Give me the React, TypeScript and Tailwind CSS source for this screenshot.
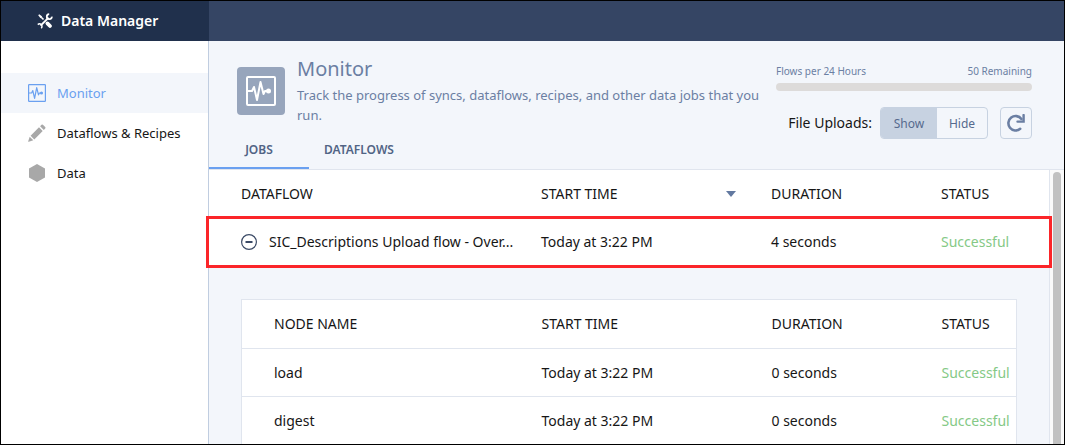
import React from "react";

const jobs = [
  { name: "SIC_Descriptions Upload flow - Over...", start: "Today at 3:22 PM", duration: "4 seconds", status: "Successful" },
];

const nodes = [
  { name: "load", start: "Today at 3:22 PM", duration: "0 seconds", status: "Successful" },
  { name: "digest", start: "Today at 3:22 PM", duration: "0 seconds", status: "Successful" },
];

function ToolsIcon() {
  return (
    <svg viewBox="0 0 16 16" className="size-4" fill="none" stroke="currentColor" aria-hidden="true">
      <path d="M6.5 6.5 4.2 4.2" strokeWidth="1.6" />
      <path d="M10.4 10.4 13 13" strokeWidth="3.8" strokeLinecap="round" />
      <path d="M2.2 1.2 5.2 3.4 3.6 5.200 1.200 2.200Z" fill="currentColor" stroke="none" />
      <path d="M3.600 12.600 11.600 4.600" strokeWidth="2" />
      <path d="M14.800 3.600A2.500 2.500 0 1 1 12.200 1.200" strokeWidth="1.800" />
      <path d="M.8 11.600A2.400 2.400 0 1 1 4.200 15.200" strokeWidth="1.500" />
    </svg>
  );
}

function PulseIcon({ className }: { className: string }) {
  return (
    <svg viewBox="0 0 30 30" className={className} fill="none" stroke="currentColor" strokeWidth="2" strokeLinejoin="round" aria-hidden="true">
      <rect x="1" y="1" width="28" height="28" rx="1" />
      <path d="M2 15H6L8 11L11 24L14.500 6L17.500 18L19 15H22" strokeLinecap="round" />
      <circle cx="22.500" cy="15" r="1.500" fill="currentColor" />
    </svg>
  );
}

function PencilIcon() {
  return (
    <svg viewBox="0 0 18 18" className="size-[18px]" fill="currentColor" aria-hidden="true">
      <path d="M13.500.8a1 1 0 0 1 1.400 0l2.300 2.300a1 1 0 0 1 0 1.400l-1.400 1.400-3.700-3.700ZM11 3.300 14.700 7 6.300 15.400 2.600 11.700ZM1.700 12.700 5.300 16.300.8 17.800Q0 18 .2 17.200Z" />
    </svg>
  );
}

function HexIcon() {
  return (
    <svg viewBox="0 0 18 18" className="size-[18px]" fill="currentColor" aria-hidden="true">
      <path d="M9 0 17 4.500V13.500L9 18 1 13.500V4.500Z" />
    </svg>
  );
}

function RefreshIcon() {
  return (
    <svg viewBox="0 0 18 18" className="size-[18px]" fill="none" stroke="currentColor" aria-hidden="true">
      <path d="M13.200 14.800A7.200 7.200 0 1 1 14.400 5" strokeWidth="2.600" strokeLinecap="round" />
      <path d="M16.600 1V7.600H10.500" strokeWidth="2.400" strokeLinecap="round" />
    </svg>
  );
}

function SideLink({ icon, label, active }: { icon: React.ReactNode; label: string; active?: boolean }) {
  return (
    <a
      href="#"
      aria-current={active ? "page" : undefined}
      className={active ? "flex h-10 items-center gap-[11px] bg-[#f3f6fb] pl-[27px] text-[#6aa0f0]" : "flex h-10 items-center gap-[11px] pl-[27px] text-[#161616]"}
    >
      <span className={active ? "text-[#6aa0f0]" : "text-[#a8a8a8]"}>{icon}</span>
      {label}
    </a>
  );
}

export default function App() {
  return (
    <div className="flex h-screen flex-col overflow-hidden border border-black bg-white font-['Noto_Sans',sans-serif] text-[13px] leading-5 text-[#161616]">
      <header className="flex h-10 shrink-0 bg-[#354564] text-white">
        <div className="flex w-[208px] items-center gap-2 bg-[#20304c] pl-9 text-sm font-semibold">
          <ToolsIcon />
          Data Manager
        </div>
      </header>
      <div className="flex min-h-0 flex-1">
        <nav className="w-[208px] shrink-0 border-r border-[#c0cde0] pt-8">
          <SideLink active icon={<PulseIcon className="size-[18px]" />} label="Monitor" />
          <SideLink icon={<PencilIcon />} label="Dataflows & Recipes" />
          <SideLink icon={<HexIcon />} label="Data" />
        </nav>
        <main className="flex min-w-0 flex-1 flex-col bg-[#f3f6fb]">
          <section className="flex h-[129px] shrink-0 justify-between border-b border-[#e0e5ee] pr-8 text-[#6b7fa3]">
            <div className="flex flex-col justify-between">
              <div className="flex gap-3 pt-4 pl-7">
                <span className="mt-[10px] flex size-12 shrink-0 items-center justify-center rounded bg-[#97a5bc] text-white">
                  <PulseIcon className="size-[30px]" />
                </span>
                <div className="w-[470px]">
                  <h1 className="text-xl leading-6">Monitor</h1>
                  <p className="mt-1 leading-5">Track the progress of syncs, dataflows, recipes, and other data jobs that you run.</p>
                </div>
              </div>
              <div role="tablist" className="flex text-xs font-semibold text-[#516485]">
                <button role="tab" aria-selected="true" className="h-9 w-[100px] border-b-2 border-[#6aa0f0]">JOBS</button>
                <button role="tab" aria-selected="false" className="h-9 w-[100px] border-b-2 border-transparent">DATAFLOWS</button>
              </div>
            </div>
            <div className="flex w-64 shrink-0 flex-col items-end pt-6">
              <div className="flex w-full justify-between text-[10px] leading-3">
                <span>Flows per 24 Hours</span>
                <span>50 Remaining</span>
              </div>
              <div className="mt-[6px] h-2 w-full rounded-full bg-[#dddbda]" />
              <div className="mt-4 flex items-center whitespace-nowrap">
                <span className="mr-2 text-sm text-[#161616]">File Uploads:</span>
                <div className="flex h-8 overflow-hidden rounded border border-[#c7d2e1] text-xs text-[#566a8e]">
                  <button aria-pressed="true" className="w-14 bg-[#c7d2e1] pt-[2px]">Show</button>
                  <button aria-pressed="false" className="w-[50px] pt-[2px]">Hide</button>
                </div>
                <button aria-label="Refresh" className="ml-3 flex size-8 items-center justify-center rounded border border-[#c7d2e1]">
                  <RefreshIcon />
                </button>
              </div>
            </div>
          </section>
          <div className="flex min-h-0 flex-1 text-sm">
            <div className="min-w-0 flex-1 border-r border-[#e0e5ee]">
              <table className="w-full table-fixed border-collapse bg-white text-left">
                <colgroup>
                  <col className="w-[332px]" />
                  <col className="w-[230px]" />
                  <col className="w-[170px]" />
                  <col />
                </colgroup>
                <thead>
                  <tr className="h-12">
                    <th className="pl-8 font-normal">DATAFLOW</th>
                    <th className="font-normal">
                      <span className="flex items-center justify-between pr-[35px]">
                        START TIME
                        <svg viewBox="0 0 10 6" className="h-[6px] w-[10px]" aria-hidden="true"><path d="M0 0H10L5 6Z" fill="#6279a0" /></svg>
                      </span>
                    </th>
                    <th className="font-normal">DURATION</th>
                    <th className="font-normal">STATUS</th>
                  </tr>
                </thead>
                <tbody>
                  {jobs.map((job) => (
                    <tr key={job.name} className="relative h-12">
                      <td className="pl-8">
                        <span className="flex items-center gap-3 whitespace-nowrap">
                          <button aria-label="Collapse" className="text-[#3b4a66]">
                            <svg viewBox="0 0 16 16" className="size-4" fill="none" stroke="currentColor"><circle cx="8" cy="8" r="7.400" strokeWidth="1.200" /><path d="M4.500 8H11.500" strokeWidth="2" /></svg>
                          </button>
                          {job.name}
                        </span>
                      </td>
                      <td>{job.start}</td>
                      <td>{job.duration}</td>
                      <td className="text-[#85c986]">
                        {job.status}
                        <span className="pointer-events-none absolute -inset-x-[3px] -top-[2px] -bottom-[2px] border-3 border-[#fb2529]" />
                      </td>
                    </tr>
                  ))}
                </tbody>
              </table>
              <div className="pt-[33px] pr-8 pl-8">
                <table className="w-full table-fixed border-collapse border border-[#e0e5ee] bg-white text-left">
                  <colgroup>
                    <col className="w-[300px]" />
                    <col className="w-[230px]" />
                    <col className="w-[170px]" />
                    <col />
                  </colgroup>
                  <thead>
                    <tr className="h-[49px] border-b border-[#e0e5ee]">
                      <th className="pl-8 font-normal">NODE NAME</th>
                      <th className="font-normal">START TIME</th>
                      <th className="font-normal">DURATION</th>
                      <th className="font-normal">STATUS</th>
                    </tr>
                  </thead>
                  <tbody>
                    {nodes.map((node) => (
                      <tr key={node.name} className="h-12 border-b border-[#e0e5ee]">
                        <td className="pl-8">{node.name}</td>
                        <td>{node.start}</td>
                        <td>{node.duration}</td>
                        <td className="text-[#85c986]">{node.status}</td>
                      </tr>
                    ))}
                  </tbody>
                </table>
              </div>
            </div>
            <div className="flex w-[14px] shrink-0 justify-center bg-[#fafafa] pt-[2px]">
              <div className="h-full w-2 rounded-t-full bg-[#c1c1c1]" />
            </div>
          </div>
        </main>
      </div>
    </div>
  );
}
